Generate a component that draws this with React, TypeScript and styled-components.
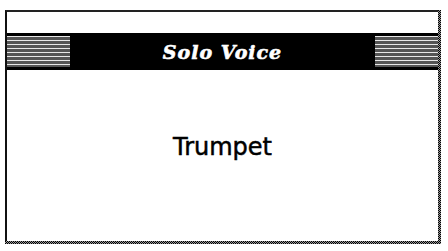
import React from 'react';
import styled, { createGlobalStyle } from 'styled-components';

const GlobalStyle = createGlobalStyle`
  html, body {
    margin: 0;
    padding: 0;
    background: #ffffff;
  }
`;

const Screen = styled.div`
  width: 448px;
  height: 251px;
  box-sizing: border-box;
  padding: 10px 4px 4px 5px;
  background: #ffffff;
`;

const Shadow = styled.div`
  width: 436px;
  height: 234px;
  box-sizing: border-box;
  padding: 0 3px 3px 0;
  background: repeating-conic-gradient(#000 0 25%, #9a9a9a 0 50%) 0 0 / 2px 2px;
`;

const Panel = styled.div`
  width: 100%;
  height: 100%;
  box-sizing: border-box;
  background: #ffffff;
  border-left: 2px solid #111;
  border-top: 2px solid #222;
  display: flex;
  flex-direction: column;
`;

const TitleBar = styled.div`
  margin-top: 21px;
  height: 37px;
  background: #000;
  display: flex;
  align-items: center;
  justify-content: space-between;
`;

const Stripes = styled.div`
  width: 63px;
  height: 31px;
  background: repeating-linear-gradient(
    to bottom,
    #e8e8e8 0px,
    #e8e8e8 1.5px,
    #555 1.5px,
    #555 4px
  );
`;

const Title = styled.span`
  color: #ffffff;
  font-family: 'DejaVu Serif', 'Liberation Serif', serif;
  font-weight: 900;
  font-style: italic;
  font-size: 19px;
  letter-spacing: 1px;
  padding-top: 1px;
  -webkit-text-stroke: 0.6px #ffffff;
`;

const Body = styled.div`
  flex: 1;
  display: flex;
  align-items: center;
  justify-content: center;
  padding-bottom: 18px;
`;

const Voice = styled.span`
  font-family: 'DejaVu Sans', 'Liberation Sans', sans-serif;
  font-size: 24px;
  color: #000;
  -webkit-text-stroke: 0.5px #000;
`;

export default function App() {
  return (
    <>
      <GlobalStyle />
      <Screen>
        <Shadow>
          <Panel>
            <TitleBar>
              <Stripes />
              <Title>Solo Voice</Title>
              <Stripes />
            </TitleBar>
            <Body>
              <Voice>Trumpet</Voice>
            </Body>
          </Panel>
        </Shadow>
      </Screen>
    </>
  );
}
